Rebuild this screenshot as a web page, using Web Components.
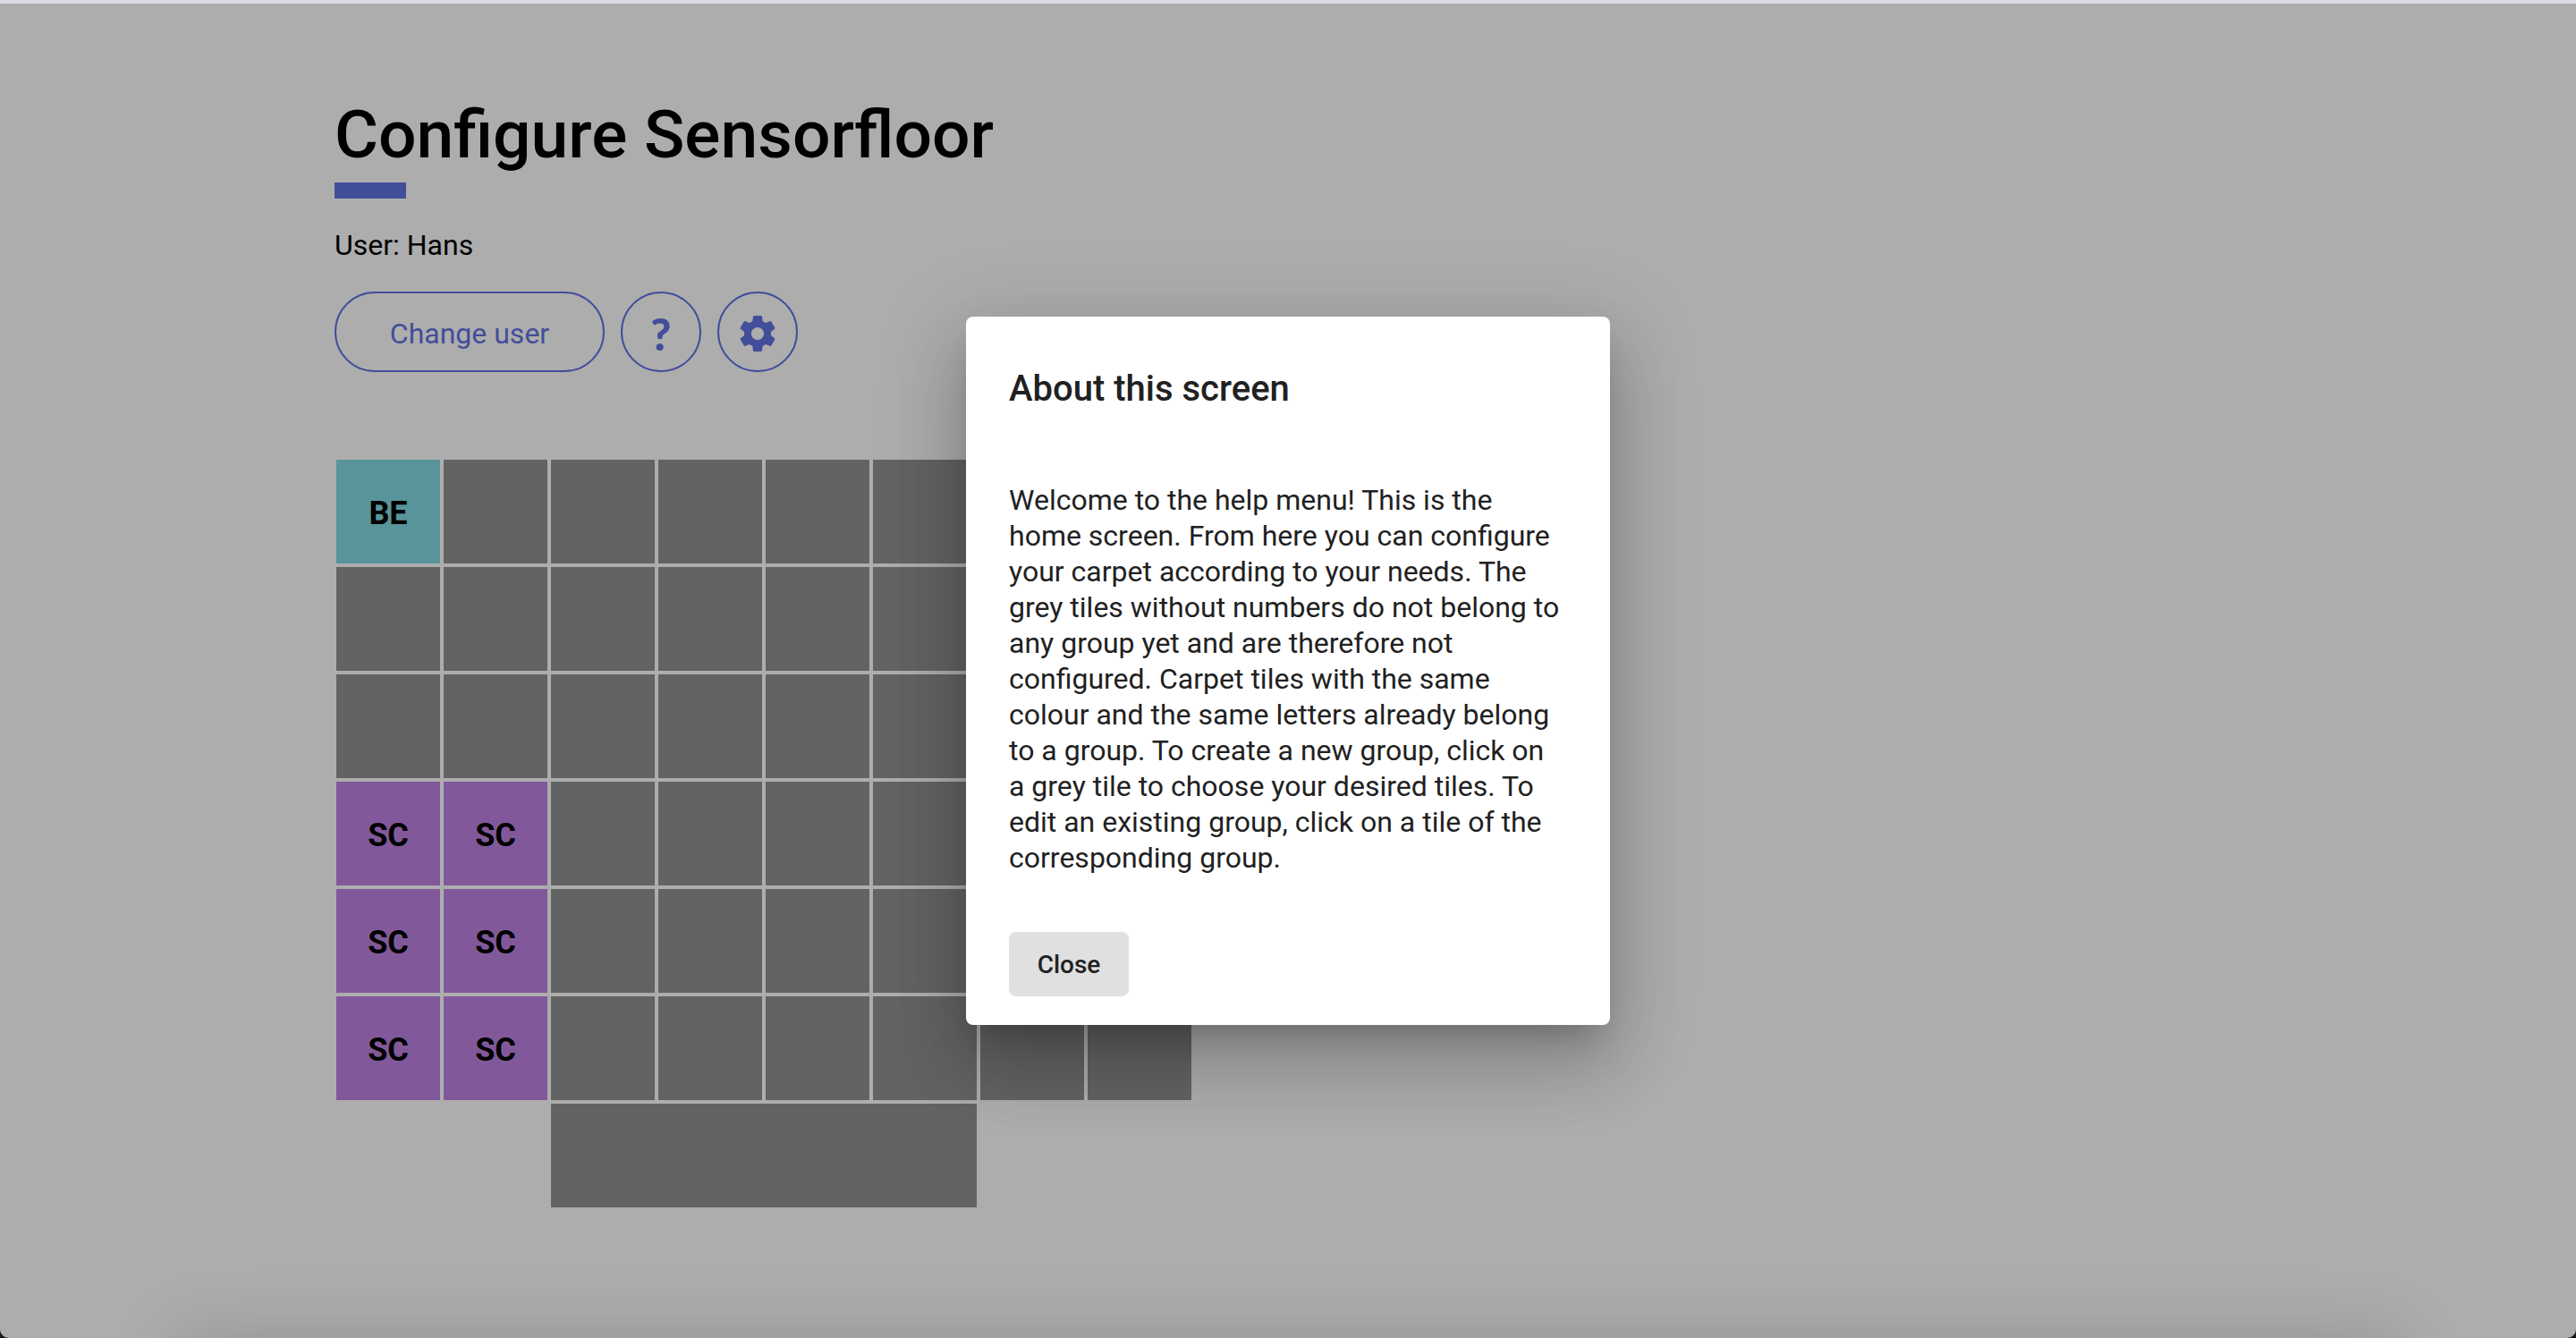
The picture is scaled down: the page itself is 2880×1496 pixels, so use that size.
<!DOCTYPE html>
<html lang="en">
<head>
<meta charset="utf-8">
<title>Configure Sensorfloor</title>
<style>
html{height:100%;background:#1d1618}
body{margin:0;min-height:100%;font-family:Roboto,"Liberation Sans",sans-serif;font-size:32px;line-height:40px;color:#000;overflow:hidden}
</style>
</head>
<body>
<sensor-app></sensor-app>
<script>
const define=(name,html,setup)=>customElements.define(name,class extends HTMLElement{
  connectedCallback(){
    if(this.shadowRoot)return;
    const root=this.attachShadow({mode:'open'});
    root.innerHTML=html;
    if(setup)setup(this,root);
  }
});

define('page-title',`
<style>
:host{display:block}
h1{margin:0;font-size:75px;line-height:96px;font-weight:500}
h1::after{content:"";display:block;width:80px;height:18px;margin-top:6px;background:#6474e4}
</style>
<h1><slot></slot></h1>`);

define('pill-button',`
<style>
:host{display:block}
button{display:flex;align-items:center;justify-content:center;box-sizing:border-box;height:90px;min-width:90px;padding:4px 0 0;border:2px solid #6474e4;border-radius:45px;background:none;color:#6474e4;font:inherit;cursor:pointer}
:host([wide]) button{width:302px}
:host([glyph]) button{font-family:Lato,sans-serif;font-weight:900;font-size:50px}
</style>
<button type="button"><slot></slot></button>`,(host,root)=>{
  const label=host.getAttribute('label');
  if(label)root.querySelector('button').setAttribute('aria-label',label);
});

define('gear-icon',`
<style>:host{display:block;width:48px;height:48px}svg{display:block;width:100%;height:100%}</style>
<svg viewBox="0 0 24 24" fill="currentColor" aria-hidden="true"><path d="M19.43 12.98c.04-.32.07-.64.07-.98s-.03-.66-.07-.98l2.11-1.65c.19-.15.24-.42.12-.64l-2-3.46c-.12-.22-.39-.3-.61-.22l-2.49 1c-.52-.4-1.08-.73-1.69-.98l-.38-2.65C14.46 2.18 14.25 2 14 2h-4c-.25 0-.46.18-.49.42l-.38 2.65c-.61.25-1.17.59-1.69.98l-2.49-1c-.23-.09-.49 0-.61.22l-2 3.46c-.13.22-.07.49.12.64l2.11 1.65c-.04.32-.07.65-.07.98s.03.66.07.98l-2.11 1.65c-.19.15-.24.42-.12.64l2 3.46c.12.22.39.3.61.22l2.49-1c.52.4 1.08.73 1.69.98l.38 2.65c.03.24.24.42.49.42h4c.25 0 .46-.18.49-.42l.38-2.65c.61-.25 1.17-.59 1.69-.98l2.49 1c.23.09.49 0 .61-.22l2-3.46c.12-.22.07-.49-.12-.64l-2.11-1.65zM12 15.5c-1.93 0-3.5-1.57-3.5-3.5s1.57-3.5 3.5-3.5 3.5 1.57 3.5 3.5-1.57 3.5-3.5 3.5z"/></svg>`);

define('floor-tile',`
<style>
:host{display:block}
:host([span]){grid-column:3 / span 4}
button{display:block;width:100%;height:116px;padding:4px 0 0;border:0;background:#939393;color:#000;font:inherit;font-size:36px;font-weight:700;text-align:center;cursor:pointer}
:host([group=BE]) button{background:#84dbe4}
:host([group=SC]) button{background:#be84e5}
</style>
<button type="button"></button>`,(host,root)=>{
  const b=root.querySelector('button'),g=host.getAttribute('group');
  if(g)b.textContent=g;else b.setAttribute('aria-label','Free tile');
});

define('floor-grid',`
<style>
:host{display:grid;grid-template-columns:repeat(8,116px);gap:4px;padding-left:2px}
</style>`,(host,root)=>{
  for(let row=0;row<6;row++)for(let col=0;col<8;col++){
    const tile=document.createElement('floor-tile');
    if(!row&&!col)tile.setAttribute('group','BE');
    if(row>2&&col<2)tile.setAttribute('group','SC');
    root.append(tile);
  }
  const wide=document.createElement('floor-tile');
  wide.setAttribute('span','');
  root.append(wide);
});

define('help-dialog',`
<style>
:host{position:absolute;inset:0;display:flex;align-items:center;justify-content:center;background:rgba(0,0,0,.32)}
section{box-sizing:border-box;width:720px;padding:48px 48px 32px;border-radius:8px;background:#fff;color:#212121;box-shadow:0 22px 30px -14px rgba(0,0,0,.2),0 48px 76px 6px rgba(0,0,0,.14),0 18px 92px 16px rgba(0,0,0,.12)}
h2{margin:0;padding:9px 0 8px;font-size:40px;line-height:48px;font-weight:500}
.text{padding:72px 0 63px;white-space:nowrap}
button{display:block;width:134px;height:72px;padding:2px 0 0;border:0;border-radius:8px;background:#e0e0e0;color:inherit;font:inherit;font-size:28px;font-weight:500;cursor:pointer}
</style>
<section role="dialog" aria-modal="true" aria-labelledby="t">
<h2 id="t"><slot name="title"></slot></h2>
<div class="text"><slot></slot></div>
<button type="button">Close</button>
</section>`);

define('bottom-sheet',`
<style>
:host{position:absolute;left:200px;right:200px;top:100%;height:200px;box-shadow:0 0 80px 0 rgba(0,0,0,.16)}
</style>`);

define('sensor-app',`
<style>
:host{position:relative;display:flex;flex-direction:column;height:100vh;overflow:hidden;border-radius:0 0 10px 10px;background:#fff}
.strip{flex:none;height:4px;background:#dcdce2}
.window{position:relative;flex:1}
main{max-width:2132px;margin:0 auto;padding-top:98px}
p{margin:0;padding:32px 0}
nav{display:flex;gap:18px;margin-bottom:98px}
</style>
<div class="strip"></div>
<div class="window">
<main>
<page-title>Configure Sensorfloor</page-title>
<p>User: Hans</p>
<nav>
<pill-button wide>Change user</pill-button>
<pill-button glyph label="Help">?</pill-button>
<pill-button label="Settings"><gear-icon></gear-icon></pill-button>
</nav>
<floor-grid></floor-grid>
</main>
<help-dialog><span slot="title">About this screen</span>Welcome to the help menu! This is the<br>home screen. From here you can configure<br>your carpet according to your needs. The<br>grey tiles without numbers do not belong to<br>any group yet and are therefore not<br>configured. Carpet tiles with the same<br>colour and the same letters already belong<br>to a group. To create a new group, click on<br>a grey tile to choose your desired tiles. To<br>edit an existing group, click on a tile of the<br>corresponding group.</help-dialog>
<bottom-sheet></bottom-sheet>
</div>`);
</script>
</body>
</html>
